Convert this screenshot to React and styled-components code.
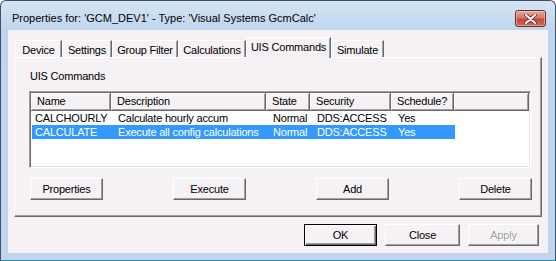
import React from 'react'
import styled, { createGlobalStyle, css } from 'styled-components'

const Global = createGlobalStyle`
  body {
    margin: 0;
    font-family: "Liberation Sans", Arial, sans-serif;
    font-size: 11px;
    letter-spacing: -0.2px;
    color: #000;
    background: #fff;
  }
`

const tabs = [
  { label: 'Device', w: 47 },
  { label: 'Settings', w: 50 },
  { label: 'Group Filter', w: 66 },
  { label: 'Calculations', w: 68 },
  { label: 'UIS Commands', w: 85, active: true },
  { label: 'Simulate', w: 53 },
]

const columns = [
  { label: 'Name', w: 80 },
  { label: 'Description', w: 155 },
  { label: 'State', w: 44 },
  { label: 'Security', w: 81 },
  { label: 'Schedule?', w: 63 },
]

const rows = [
  { id: 1, cells: ['CALCHOURLY', 'Calculate hourly accum', 'Normal', 'DDS:ACCESS', 'Yes'] },
  { id: 2, cells: ['CALCULATE', 'Execute all config calculations', 'Normal', 'DDS:ACCESS', 'Yes'], selected: true },
]

const App = () => {
  return (
    <>
      <Global />
      <Window>
        <TitleBar>
          <Title>Properties for: 'GCM_DEV1' - Type: 'Visual Systems GcmCalc'</Title>
          <CloseBtn>
            <svg width="13" height="10" viewBox="0 0 13 10">
              <path d="M2 1 L11 9 M11 1 L2 9" stroke="#6a2020" strokeWidth="3.6" strokeLinecap="round" />
              <path d="M2 1 L11 9 M11 1 L2 9" stroke="#fff" strokeWidth="2.2" strokeLinecap="round" />
            </svg>
          </CloseBtn>
        </TitleBar>
        <Client>
          <TabArea>
            <TabRow>
              {tabs.map((t) => (
                <Tab key={t.label} $w={t.w} $active={t.active}>
                  {t.label}
                </Tab>
              ))}
            </TabRow>
            <Panel>
              <GroupLabel>UIS Commands</GroupLabel>
              <ListView>
                <Header>
                  {columns.map((c) => (
                    <HeadCell key={c.label} $w={c.w}>
                      {c.label}
                    </HeadCell>
                  ))}
                  <HeadFill />
                </Header>
                {rows.map((r) => (
                  <Row key={r.id} $selected={r.selected}>
                    {r.cells.map((txt, i) => (
                      <Cell key={i} $w={columns[i].w} $first={i === 0}>
                        {txt}
                      </Cell>
                    ))}
                  </Row>
                ))}
              </ListView>
              <ActionRow>
                <Button>Properties</Button>
                <Button>Execute</Button>
                <Button>Add</Button>
                <Button>Delete</Button>
              </ActionRow>
            </Panel>
          </TabArea>
          <DialogRow>
            <Button $default>OK</Button>
            <Button $w={75}>Close</Button>
            <Button $w={71} disabled>
              Apply
            </Button>
          </DialogRow>
        </Client>
      </Window>
    </>
  )
}

const Window = styled.div`
  width: 556px;
  height: 261px;
  box-sizing: border-box;
  background: linear-gradient(#d4e4f5, #bfd5ee 30px, #c0d6ef);
  border: 1px solid #44505c;
  border-bottom-color: #2a8ca6;
  border-radius: 6px 6px 0 0;
  padding: 0 7px 7px 7px;
  display: flex;
  flex-direction: column;
`

const TitleBar = styled.div`
  height: 29px;
  display: flex;
  justify-content: space-between;
  align-items: flex-start;
`

const Title = styled.div`
  padding: 11px 0 0 4px;
  font-size: 11px;
  letter-spacing: 0;
  white-space: nowrap;
`

const CloseBtn = styled.div`
  margin: 9px 2px 0 0;
  width: 31px;
  height: 17px;
  box-sizing: border-box;
  border: 1px solid #6e2a24;
  border-radius: 3px;
  background: linear-gradient(#e7a99c, #d47a68 45%, #c24a38 55%, #d26a52);
  box-shadow: inset 0 0 0 1px rgba(255, 220, 210, 0.5);
  display: flex;
  align-items: center;
  justify-content: center;
`

const Client = styled.div`
  flex: 1;
  background: #f5f1f5;
  display: flex;
  flex-direction: column;
`

const TabArea = styled.div`
  padding: 7px 0 0 6px;
  width: 528px;
`

const TabRow = styled.div`
  display: flex;
  align-items: flex-end;
  height: 20px;
  padding-left: 1px;
`

const Tab = styled.div`
  width: ${(p) => p.$w}px;
  height: 17px;
  box-sizing: border-box;
  border-top: 1px solid #fff;
  border-left: 1px solid #fff;
  border-right: 1px solid #696969;
  box-shadow: inset -1px 0 #a0a0a0;
  display: flex;
  align-items: center;
  justify-content: center;
  white-space: nowrap;
  padding-top: 2px;
  ${(p) =>
    p.$active &&
    css`
      height: 21px;
      margin-bottom: -1px;
      position: relative;
      z-index: 1;
      background: #f5f1f5;
      padding-top: 0;
      padding-bottom: 2px;
    `}
`

const Panel = styled.div`
  height: 160px;
  box-sizing: border-box;
  border: 1px solid;
  border-color: #fff #696969 #696969 #fff;
  box-shadow: inset -1px -1px #a0a0a0;
  padding: 11px 0 0 14px;
  display: flex;
  flex-direction: column;
`

const GroupLabel = styled.div`
  height: 14px;
  line-height: 14px;
  margin: 0 0 8px 1px;
`

const ListView = styled.div`
  width: 502px;
  height: 77px;
  box-sizing: border-box;
  border: 1px solid;
  border-color: #a0a0a0 #fff #fff #a0a0a0;
  box-shadow: inset 1px 1px #696969, inset -1px -1px #e3e3e3;
  background: #fff;
  padding: 1px;
  overflow: hidden;
`

const Header = styled.div`
  display: flex;
  height: 18px;
`

const HeadCell = styled.div`
  width: ${(p) => p.$w}px;
  box-sizing: border-box;
  background: #f5f1f5;
  border-right: 1px solid #696969;
  border-bottom: 1px solid #696969;
  box-shadow: inset 1px 1px #fff, inset -1px -1px #a0a0a0;
  padding-left: 6px;
  line-height: 16px;
  white-space: nowrap;
`

const HeadFill = styled(HeadCell)`
  flex: 1;
`

const Row = styled.div`
  display: flex;
  width: 423px;
  height: 14px;
  line-height: 14px;
  margin-left: 1px;
  ${(p) =>
    p.$selected &&
    css`
      background: #3399ff;
      color: #fff;
    `}
`

const Cell = styled.div`
  width: ${(p) => p.$w - (p.$first ? 1 : 0)}px;
  box-sizing: border-box;
  padding-left: ${(p) => (p.$first ? 3 : 7)}px;
  white-space: nowrap;
  overflow: hidden;
`

const ActionRow = styled.div`
  width: 502px;
  margin: 10px 0 0 1px;
  display: flex;
  justify-content: space-between;
`

const Button = styled.button`
  width: ${(p) => p.$w || 73}px;
  height: 22px;
  box-sizing: border-box;
  font-family: inherit;
  font-size: 11px;
  letter-spacing: inherit;
  color: #000;
  background: #f5f1f5;
  border: 1px solid;
  border-color: #fff #696969 #696969 #fff;
  box-shadow: inset -1px -1px #a0a0a0;
  padding: 0;
  &:disabled {
    color: #a0a0a0;
    text-shadow: 1px 1px #fff;
  }
  ${(p) =>
    p.$default &&
    css`
      border-color: #000;
      box-shadow: inset 1px 1px #fff, inset -1px -1px #696969, inset -2px -2px #a0a0a0;
    `}
`

const DialogRow = styled.div`
  display: flex;
  justify-content: flex-end;
  gap: 8px;
  padding: 7px 9px 0 0;
`

export default App
